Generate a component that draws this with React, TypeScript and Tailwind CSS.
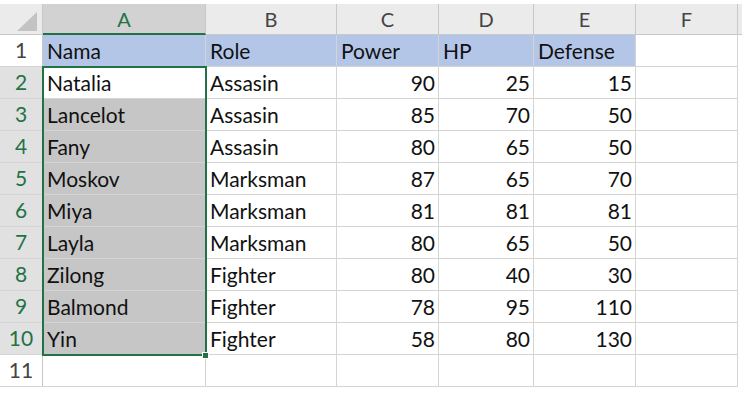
import React from "react";

const cols = [
  { key: "A", w: "w-[163px]" },
  { key: "B", w: "w-[131px]" },
  { key: "C", w: "w-[102px]" },
  { key: "D", w: "w-[95px]" },
  { key: "E", w: "w-[102px]" },
  { key: "F", w: "w-[102px]" },
];

const rows: (string | number)[][] = [
  ["Nama", "Role", "Power", "HP", "Defense"],
  ["Natalia", "Assasin", 90, 25, 15],
  ["Lancelot", "Assasin", 85, 70, 50],
  ["Fany", "Assasin", 80, 65, 50],
  ["Moskov", "Marksman", 87, 65, 70],
  ["Miya", "Marksman", 81, 81, 81],
  ["Layla", "Marksman", 80, 65, 50],
  ["Zilong", "Fighter", 80, 40, 30],
  ["Balmond", "Fighter", 78, 95, 110],
  ["Yin", "Fighter", 58, 80, 130],
  ["", "", "", "", ""],
];

export default function App() {
  return (
    <div
      className="relative w-[742px] h-[394px] overflow-hidden bg-white text-[#111]"
      style={{ fontFamily: "Lato, 'Open Sans', sans-serif" }}
    >
      {/* column headers */}
      <div className="flex h-[35px] pt-[4px] bg-white">
        <div className="w-[43px] shrink-0 bg-[#ebebeb] border-r border-b border-[#c8c8c8] relative">
          <svg className="absolute left-[17px] top-[8px]" width="20" height="19" viewBox="0 0 20 19">
            <polygon points="20,0 20,19 0,19" fill="#c3c3c3" />
          </svg>
        </div>
        {cols.map((c) => (
          <div
            key={c.key}
            className={`${c.w} shrink-0 flex items-center justify-center text-[20px] border-r ${
              c.key === "A"
                ? "bg-[#d2d2d2] text-[#217346] border-b-2 border-b-[#217346] border-r-[#c8c8c8]"
                : "bg-[#ebebeb] text-[#444] border-b border-[#c8c8c8]"
            }`}
          >
            {c.key}
          </div>
        ))}
        <div className="flex-1 bg-[#ebebeb] border-b border-[#c8c8c8]" />
      </div>

      {rows.map((r, i) => {
        const n = i + 1;
        const sel = n >= 2 && n <= 10;
        return (
          <div key={n} className="flex h-[32px]">
            <div
              className={`w-[43px] shrink-0 flex items-end justify-center pb-[1px] text-[21px] border-r border-r-[#c8c8c8] border-b border-[#d4d4d4] ${
                sel ? "bg-[#e1e1e1] text-[#217346]" : "bg-white text-[#444]"
              }`}
            >
              {n}
            </div>
            {cols.map((c, j) => {
              const v = j < 5 ? r[j] : "";
              const isNum = typeof v === "number";
              let bg = "bg-white";
              if (n === 1 && j < 5) bg = "bg-[#b4c6e7]";
              if (j === 0 && n >= 3 && n <= 10) bg = "bg-[#c6c6c6]";
              return (
                <div
                  key={c.key}
                  className={`${c.w} shrink-0 flex items-end pb-[1px] text-[21px] leading-[28px] border-r border-b border-[#d4d4d4] ${bg} ${
                    isNum ? "justify-end pr-[3px]" : "justify-start pl-[4px]"
                  }`}
                >
                  {v}
                </div>
              );
            })}
            <div className="flex-1" />
          </div>
        );
      })}

      {/* selection A2:A10 */}
      <div className="absolute left-[42px] top-[66px] w-[165px] h-[290px] border-2 border-[#217346] pointer-events-none" />
      <div className="absolute left-[202px] top-[352px] w-[7px] h-[7px] bg-[#217346] border border-white" />
    </div>
  );
}
